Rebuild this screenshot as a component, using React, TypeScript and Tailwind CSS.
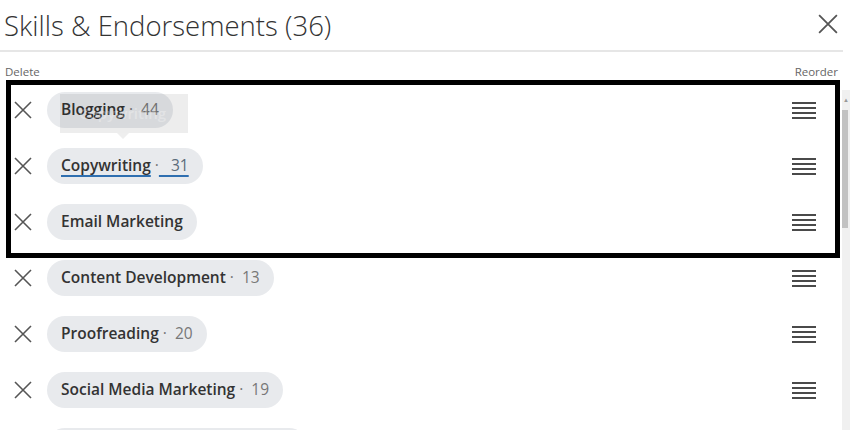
const skills = [
    { name: "Blogging", count: "44" },
    { name: "Copywriting", count: "31", link: true },
    { name: "Email Marketing" },
    { name: "Content Development", count: "13" },
    { name: "Proofreading", count: "20" },
    { name: "Social Media Marketing", count: "19" },
    { name: "Search Engine Optimization", count: "9" },
];

const CloseIcon = ({ size = 18 }: { size?: number }) => (
    <svg width={size} height={size} viewBox="0 0 18 18" fill="none" stroke="currentColor" strokeWidth="1.6">
        <path d="M1 1L17 17M17 1L1 17" />
    </svg>
);

const DragHandle = () => (
    <div className="flex flex-col gap-[3px] w-[24px]">
        <div className="h-[2px] bg-[#4a4a4a]"></div>
        <div className="h-[2px] bg-[#4a4a4a]"></div>
        <div className="h-[2px] bg-[#4a4a4a]"></div>
        <div className="h-[2px] bg-[#4a4a4a]"></div>
    </div>
);

export default function App() {
    return (
        <div
            className="relative w-[850px] h-[438px] bg-white overflow-hidden text-[#333]"
            style={{ fontFamily: '"Segoe UI", "Open Sans", "Noto Sans", sans-serif' }}
        >
            <div className="h-[52px] flex items-center justify-between pl-[4px] pr-[5px] border-b-[2px] border-[#e6e6e6] mr-[7px]">
                <h1 className="text-[27.5px] leading-none font-light text-[#333] pt-[2px]">
                    Skills &amp; Endorsements (36)
                </h1>
                <button className="text-[#555] -mt-[2px]">
                    <CloseIcon size={20} />
                </button>
            </div>

            <div className="flex h-[378px]">
                <div className="flex-1 overflow-hidden">
                    <div className="flex justify-between pl-[5px] pr-[4px] pt-[13px] h-[30px] text-[11.5px] leading-[14px] text-[#666]">
                        <span>Delete</span>
                        <span>Reorder</span>
                    </div>

                    <div className="flex flex-col h-[348px] overflow-hidden">
                        {skills.map((s) => (
                            <div key={s.name} className="h-[56px] shrink-0 flex items-center pl-[14px] pr-[26px]">
                                <div className="text-[#555]">
                                    <CloseIcon />
                                </div>
                                <div className="ml-[15px] h-[36px] px-[14px] rounded-full bg-[#e8eaed] flex items-center text-[15.5px] whitespace-nowrap">
                                    {s.link ? (
                                        <>
                                            <span className="font-semibold text-[#333] underline decoration-[#2f6fb0] underline-offset-[4px] decoration-[1.5px]">
                                                {s.name}
                                            </span>
                                            <span className="text-[#777]">&nbsp;·</span>
                                            <span className="text-[#5a6a7a] underline decoration-[#2f6fb0] underline-offset-[4px] decoration-[1.5px]">
                                                &nbsp;&nbsp; {s.count}
                                            </span>
                                        </>
                                    ) : (
                                        <>
                                            <span className="font-semibold text-[#333]">{s.name}</span>
                                            {s.count && <span className="text-[#777]">&nbsp;·&nbsp; {s.count}</span>}
                                        </>
                                    )}
                                </div>
                                <div className="ml-auto">
                                    <DragHandle />
                                </div>
                            </div>
                        ))}
                    </div>
                </div>

                <div className="w-[8px] mt-[38px] h-[340px] bg-[#f0f0f0] flex flex-col">
                    <div className="h-[20px] text-[6px] text-[#999] text-center leading-[20px]">▲</div>
                    <div className="h-[118px] bg-[#c2c2c2] w-[6px]"></div>
                </div>
            </div>

            {/* drag ghost over Blogging */}
            <div className="absolute left-[60px] top-[94px] w-[128px] h-[39px] bg-black/[0.07] flex items-center justify-end pr-[22px]">
                <span className="text-[15px] font-semibold text-white/30">Copywriting</span>
            </div>
            <div className="absolute left-[117px] top-[133px] w-0 h-0 border-l-[6px] border-r-[6px] border-t-[6px] border-l-transparent border-r-transparent border-t-[#eeeeee]"></div>

            {/* annotation frame */}
            <div className="absolute left-[6px] top-[80px] w-[834px] h-[178px] border-[5px] border-black"></div>
        </div>
    );
}
